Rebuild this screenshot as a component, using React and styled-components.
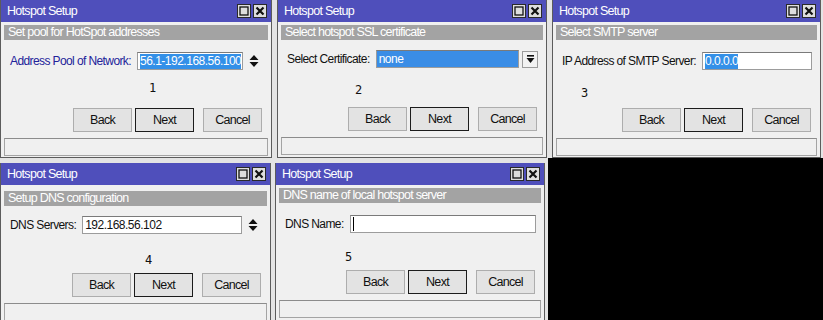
import React from 'react';
import styled, { createGlobalStyle } from 'styled-components';

const Global = createGlobalStyle`
  html, body { margin: 0; padding: 0; background: #000; }
  body { width: 823px; height: 320px; overflow: hidden; font-family: "Liberation Sans", Arial, sans-serif; }
  #root { width: 823px; height: 320px; }
`;

const Stage = styled.div`
  width: 823px;
  height: 320px;
  background: #000;
  display: flex;
  flex-direction: column;
  overflow: hidden;
`;

const TopRow = styled.div`
  display: flex;
  height: 158px;
  gap: 5px;
  background: #e4e4e4;
  flex-shrink: 0;
`;

const BottomRow = styled.div`
  display: flex;
  width: 548px;
  flex: 1;
  gap: 4px;
  padding-top: 5px;
  background: #e4e4e4;
  box-sizing: border-box;
  overflow: hidden;
`;

const Win = styled.div`
  width: ${p => p.$w}px;
  flex-shrink: 0;
  height: ${p => (p.$cut ? '160px' : '100%')};
  background: #f0f0f0;
  border: 1px solid #5c5c5c;
  border-top: 0;
  box-sizing: border-box;
  display: flex;
  flex-direction: column;
  overflow: hidden;
`;

const TitleBar = styled.div`
  height: 22px;
  flex-shrink: 0;
  background: #4f4fbb;
  display: flex;
  align-items: center;
  justify-content: space-between;
  padding: 0 4px 0 6px;
  color: #fff;
  font-size: 12.5px;
  letter-spacing: -0.7px;
`;

const TitleButtons = styled.div`
  display: flex;
  gap: 2px;
`;

const TitleBtn = styled.div`
  width: 14px;
  height: 14px;
  box-sizing: border-box;
  background: #dedede;
  border: 1px solid #2a2a2a;
  display: flex;
  align-items: center;
  justify-content: center;
`;

const Body = styled.div`
  display: flex;
  flex-direction: column;
  padding: 0 3px;
`;

const Subtitle = styled.div`
  margin-top: ${p => p.$gap}px;
  height: 15px;
  line-height: 15px;
  background: #a3a3a3;
  color: #fff;
  font-size: 12.5px;
  letter-spacing: -0.75px;
  padding-left: 4px;
  white-space: nowrap;
  overflow: hidden;
`;

const FieldRow = styled.div`
  margin-top: ${p => p.$gap}px;
  height: 18px;
  display: flex;
  align-items: center;
  padding: 0 5px 0 6px;
`;

const Label = styled.span`
  font-size: 12px;
  letter-spacing: -0.6px;
  color: ${p => p.$color || '#111'};
  white-space: nowrap;
  margin-right: 6px;
`;

const Input = styled.div`
  flex: 1;
  min-width: 0;
  height: 18px;
  box-sizing: border-box;
  background: ${p => (p.$filled ? '#3a8de6' : '#fff')};
  border: 1px solid #9c9c9c;
  border-top-color: #7a7a7a;
  display: flex;
  align-items: center;
  padding-left: 2px;
  font-size: 12px;
  letter-spacing: -0.5px;
  color: ${p => (p.$filled ? '#fff' : '#111')};
  white-space: nowrap;
  overflow: hidden;
`;

const Sel = styled.span`
  background: #3390e8;
  color: #fff;
  line-height: 15px;
`;

const Caret = styled.span`
  width: 1px;
  height: 14px;
  background: #000;
`;

const Spin = styled.div`
  width: 10px;
  margin: 0 4px 0 6px;
  display: flex;
  align-items: center;
`;

const DropBtn = styled.div`
  width: 16px;
  height: 17px;
  margin-left: 3px;
  box-sizing: border-box;
  background: #f2f2f2;
  border: 1px solid #9c9c9c;
  display: flex;
  align-items: center;
  justify-content: center;
`;

const NumRow = styled.div`
  height: ${p => p.$h}px;
  box-sizing: border-box;
  padding-left: ${p => p.$x}px;
  padding-top: ${p => p.$y}px;
  font-family: "DejaVu Sans Mono", "Liberation Mono", monospace;
  font-size: 12px;
  line-height: 14px;
  color: #111;
`;

const ButtonRow = styled.div`
  display: flex;
  justify-content: flex-end;
  padding-right: 6px;
  gap: 3px;
`;

const Button = styled.div`
  width: 59px;
  height: 24px;
  box-sizing: border-box;
  background: #e3e3e3;
  border: 1px solid ${p => (p.$default ? '#1c1c1c' : '#adadad')};
  display: flex;
  align-items: center;
  justify-content: center;
  font-size: 12.5px;
  letter-spacing: -0.7px;
  color: #111;
  margin-left: ${p => (p.$spaced ? '6px' : '0')};
`;

const Status = styled.div`
  margin-top: 6px;
  height: 18px;
  box-sizing: border-box;
  border: 1px solid #a4a4a4;
  border-top-color: #8c8c8c;
  background: #f0f0f0;
`;

const MaxIcon = () => (
  <svg width="10" height="10" viewBox="0 0 10 10">
    <rect x="1" y="1" width="8" height="8" fill="none" stroke="#111" strokeWidth="1.3" />
  </svg>
);

const CloseIcon = () => (
  <svg width="10" height="10" viewBox="0 0 10 10">
    <path d="M1.5 1.5 L8.5 8.5 M8.5 1.5 L1.5 8.5" stroke="#111" strokeWidth="2.2" />
  </svg>
);

const SpinIcon = () => (
  <svg width="10" height="14" viewBox="0 0 10 14">
    <path d="M5 1 L9.5 6 L0.5 6 Z M0.5 8 L9.5 8 L5 13 Z" fill="#111" />
  </svg>
);

const DropIcon = () => (
  <svg width="9" height="10" viewBox="0 0 9 10">
    <rect x="1" y="1" width="7" height="1.6" fill="#111" />
    <path d="M0.5 4 L8.5 4 L4.5 9 Z" fill="#111" />
  </svg>
);

function Dialog({ w, cut, subtitle, label, labelColor, field, num, numX, numY, subGap = 3, fieldGap = 12, numH = 38 }) {
  return (
    <Win $w={w} $cut={cut}>
      <TitleBar>
        <span>Hotspot Setup</span>
        <TitleButtons>
          <TitleBtn><MaxIcon /></TitleBtn>
          <TitleBtn><CloseIcon /></TitleBtn>
        </TitleButtons>
      </TitleBar>
      <Body>
        <Subtitle $gap={subGap}>{subtitle}</Subtitle>
        <FieldRow $gap={fieldGap}>
          <Label $color={labelColor}>{label}</Label>
          {field}
        </FieldRow>
        <NumRow $x={numX} $y={numY} $h={numH}>{num}</NumRow>
        <ButtonRow>
          <Button>Back</Button>
          <Button $default>Next</Button>
          <Button $spaced>Cancel</Button>
        </ButtonRow>
        <Status />
      </Body>
    </Win>
  );
}

export default function App() {
  return (
    <Stage>
      <Global />
      <TopRow>
        <Dialog
          w={272}
          subtitle="Set pool for HotSpot addresses"
          label="Address Pool of Network:"
          labelColor="#22229a"
          num="1"
          numX={145}
          numY={11}
          field={
            <>
              <Input><Sel>56.1-192.168.56.100</Sel></Input>
              <Spin><SpinIcon /></Spin>
            </>
          }
        />
        <Dialog
          w={270}
          subtitle="Select hotspot SSL certificate"
          label="Select Certificate:"
          num="2"
          numX={74}
          numY={15}
          fieldGap={10}
          numH={39}
          field={
            <>
              <Input $filled>none</Input>
              <DropBtn><DropIcon /></DropBtn>
            </>
          }
        />
        <Dialog
          w={269}
          subtitle="Select SMTP server"
          label="IP Address of SMTP Server:"
          num="3"
          numX={25}
          numY={16}
          field={<Input><Sel>0.0.0.0</Sel></Input>}
        />
      </TopRow>
      <BottomRow>
        <Dialog
          w={271}
          cut
          subtitle="Setup DNS configuration"
          label="DNS Servers:"
          num="4"
          numX={141}
          numY={19}
          subGap={6}
          fieldGap={10}
          numH={39}
          field={
            <>
              <Input>192.168.56.102</Input>
              <Spin><SpinIcon /></Spin>
            </>
          }
        />
        <Dialog
          w={270}
          cut
          subtitle="DNS name of local hotspot server"
          label="DNS Name:"
          num="5"
          numX={66}
          numY={17}
          numH={37}
          field={<Input><Caret /></Input>}
        />
      </BottomRow>
    </Stage>
  );
}
